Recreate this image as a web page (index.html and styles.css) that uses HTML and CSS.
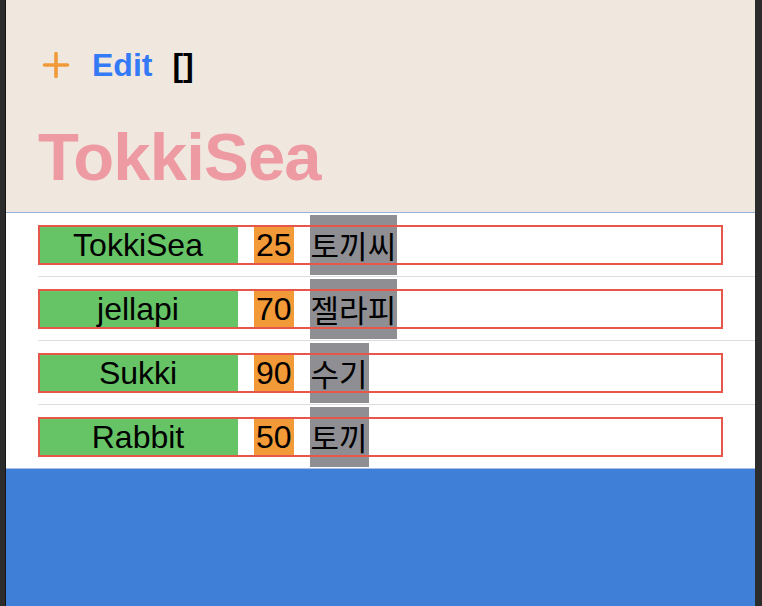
FILE: index.html
```html
<html>
<head>
  <title>TokkiSea</title>
  <link rel="stylesheet" href="styles.css">
</head>
<body>

<div class="screen">

  <div class="header">
    <div class="toolbar">
      <svg class="add_icon" width="28" height="28" viewBox="0 0 28 28">
        <path d="M14 2.5V25.5M2.5 14H25.5" fill="none" stroke="#f19a38" stroke-width="3.6" stroke-linecap="round"/>
      </svg>
      <span class="edit_button">Edit</span>
      <span class="brackets">[]</span>
    </div>
    <h1 class="title">TokkiSea</h1>
  </div>

  <div class="list">
    <div class="row">
      <div class="item">
        <div class="name">TokkiSea</div>
        <div class="age">25</div>
        <div class="korean">토끼씨</div>
      </div>
    </div>
    <div class="row">
      <div class="item">
        <div class="name">jellapi</div>
        <div class="age">70</div>
        <div class="korean">젤라피</div>
      </div>
    </div>
    <div class="row">
      <div class="item">
        <div class="name">Sukki</div>
        <div class="age">90</div>
        <div class="korean">수기</div>
      </div>
    </div>
    <div class="row last">
      <div class="item">
        <div class="name">Rabbit</div>
        <div class="age">50</div>
        <div class="korean">토끼</div>
      </div>
    </div>
  </div>

  <div class="footer"></div>

</div>

</body>
</html>
```

FILE: styles.css
```css
body {
  margin: 0;
  height: 606px;
  overflow: hidden;
  background: #2c2c2c;
  font-family: "Liberation Sans", Arial, sans-serif;
}

.screen {
  margin-left: 6px;
  width: 749px;
  height: 606px;
  display: flex;
  flex-direction: column;
  background: white;
  box-shadow: -1px 0 0 #151515;
}

/* header */
.header {
  background: #f0e7df;
  padding: 49px 0 22px 0;
  border-bottom: 1px solid #8fb1df;
}
.toolbar {
  display: flex;
  align-items: center;
  gap: 20px;
  height: 32px;
  padding-left: 36px;
  font-size: 32px;
  line-height: 32px;
  font-weight: bold;
}
.add_icon {
  display: block;
  margin-right: 2px;
}
.edit_button {
  color: #3479f5;
}
.brackets {
  color: black;
}
.title {
  margin: 42px 0 0 0;
  padding-left: 32px;
  font-size: 67px;
  line-height: 67px;
  letter-spacing: -0.8px;
  font-weight: bold;
  color: #ee9aa3;
}

/* list */
.row {
  height: 63px;
  margin-left: 32px;
  padding-right: 32px;
  display: flex;
  align-items: center;
  border-bottom: 1px solid #dddddd;
}
.row.last {
  border-bottom: 0;
}
.item {
  position: relative;
  flex: 1;
  height: 40px;
  display: flex;
  align-items: center;
  gap: 16px;
  font-size: 32px;
  line-height: 40px;
  color: black;
}
.item::after {
  content: "";
  position: absolute;
  top: 0;
  left: 0;
  right: 0;
  bottom: 0;
  border: 2px solid #e6564b;
}
.name {
  width: 200px;
  height: 40px;
  text-align: center;
  background: #66c466;
}
.age {
  height: 40px;
  padding: 0 2px;
  background: #f29a38;
}
.korean {
  padding: 10px 1px;
  font-family: "Noto Sans CJK KR", sans-serif;
  font-size: 31px;
  line-height: 40px;
  background: #8e8e93;
}

/* bottom */
.footer {
  flex: 1;
  background: #407fd7;
  border-top: 1px solid #a9c0e2;
}
```
